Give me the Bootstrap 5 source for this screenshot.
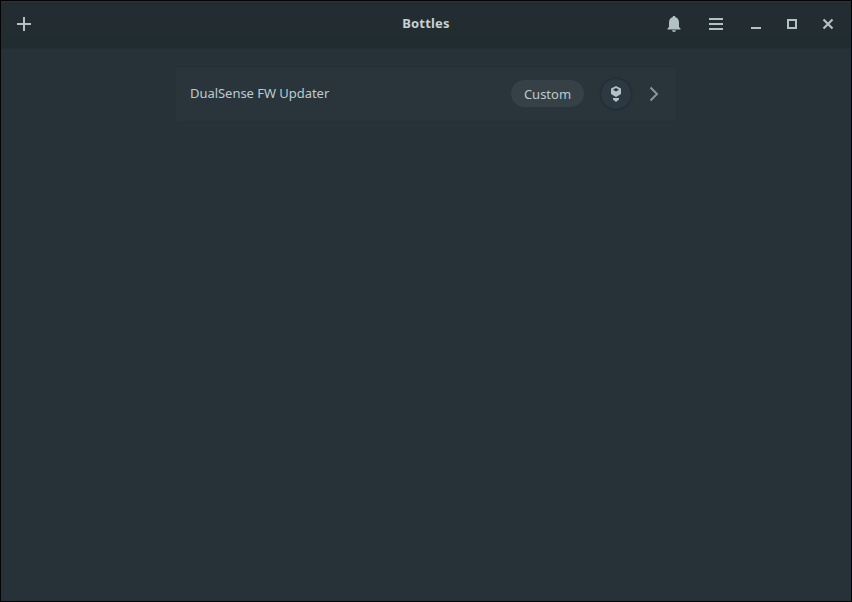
<!DOCTYPE html>
<html lang="en">
<head>
<meta charset="utf-8">
<title>Bottles</title>
<meta name="viewport" content="width=device-width, initial-scale=1">
<link href="https://cdn.jsdelivr.net/npm/bootstrap@5.3.0/dist/css/bootstrap.min.css" rel="stylesheet">
<style>
body { background: #273238; color: #bdcbd0; font: 13px/18px "Noto Sans", sans-serif; }
.app-window { border: 1px solid #020405; background: #273238; }
.titlebar { height: 46px; background: linear-gradient(#232d31, #212c31); box-shadow: 0 1px 2px rgba(0,0,0,.2), inset 0 1px #2a3438; color: #b3c1c7; padding: 0 11px; display: grid; grid-template-columns: 1fr auto 1fr; align-items: center; }
.tool { width: 24px; height: 24px; padding: 0; border: 0; background: none; color: inherit; display: block; }
.tool svg, .arrow svg, .wine svg { display: block; }
.window-title { font-weight: 700; font-size: 13px; letter-spacing: .2px; color: #c5d1d5; padding-bottom: 2px; }
.menu-tools { gap: 18px; margin-right: 16px; }
.window-tools { gap: 12px; }
.bottle-list { width: 500px; margin: 20px auto 0; }
.bottle-row { height: 54px; background: #2a353b; border: 0; border-radius: 1px; color: inherit; padding: 0 10px 0 14px; box-shadow: 0 0 2px rgba(0,0,0,.06); }
.bottle-list .bottle-row { border-radius: 1px; }
.bottle-name { padding-bottom: 2px; letter-spacing: -.04px; }
.environment { width: 73px; height: 27px; background: #354047; border-radius: 14px; margin: 0 17px 1px 0; }
.wine { width: 30px; height: 30px; background: #2c3942; box-shadow: 0 0 2px 1px rgba(20,30,36,.4); margin-right: 11px; color: #b3c1c7; }
.arrow { color: #89959a; }
</style>
<script src="https://cdn.jsdelivr.net/npm/bootstrap@5.3.0/dist/js/bootstrap.bundle.min.js"></script>
</head>
<body>
<div class="app-window vh-100 overflow-hidden">
  <header class="titlebar">
    <button class="tool" aria-label="Add"><svg width="24" height="24"><path d="M12 5v14M5 12h14" stroke="currentColor" stroke-width="2"/></svg></button>
    <div class="window-title">Bottles</div>
    <div class="d-flex justify-content-end">
      <div class="menu-tools d-flex">
        <button class="tool" aria-label="Notifications"><svg width="24" height="24" fill="currentColor"><path d="M12 4c-.9 0-1.500.6-1.500 1.300C8.100 6 7 8 7 10.500V15l-1.500 1.500V17.500h13v-1L17 15v-4.500C17 8 15.900 6 13.500 5.300 13.500 4.600 12.900 4 12 4zM10 18.200a2 1.700 0 0 0 4 0z"/></svg></button>
        <button class="tool" aria-label="Menu"><svg width="24" height="24"><path d="M5 7h14M5 12h14M5 17h14" stroke="currentColor" stroke-width="2"/></svg></button>
      </div>
      <div class="window-tools d-flex">
        <button class="tool" aria-label="Minimize"><svg width="24" height="24"><path d="M7 16h10" stroke="currentColor" stroke-width="2"/></svg></button>
        <button class="tool" aria-label="Maximize"><svg width="24" height="24"><path d="M8 8h8v8H8z" fill="none" stroke="currentColor" stroke-width="2"/></svg></button>
        <button class="tool" aria-label="Close"><svg width="24" height="24"><path d="M7.500 7.500l9 9M16.500 7.500l-9 9" stroke="currentColor" stroke-width="2.200"/></svg></button>
      </div>
    </div>
  </header>
  <main class="bottle-list list-group">
    <div class="bottle-row list-group-item d-flex align-items-center">
      <span class="bottle-name me-auto">DualSense FW Updater</span>
      <span class="environment d-flex align-items-center justify-content-center">Custom</span>
      <span class="wine rounded-circle d-flex align-items-center justify-content-center"><svg width="16" height="16" fill="currentColor"><path fill-rule="evenodd" d="M8 0l5 2.500v5.500L8 11 3 8v-5.500zM8 2L5 3.700 8 5.400l3-1.700z"/><path d="M5 12h6v1.500L8 16l-3-2.500z"/></svg></span>
      <span class="arrow"><svg width="24" height="24"><path d="M8.500 5.500l6.500 6.500-6.500 6.500" fill="none" stroke="currentColor" stroke-width="2"/></svg></span>
    </div>
  </main>
</div>
</body>
</html>
